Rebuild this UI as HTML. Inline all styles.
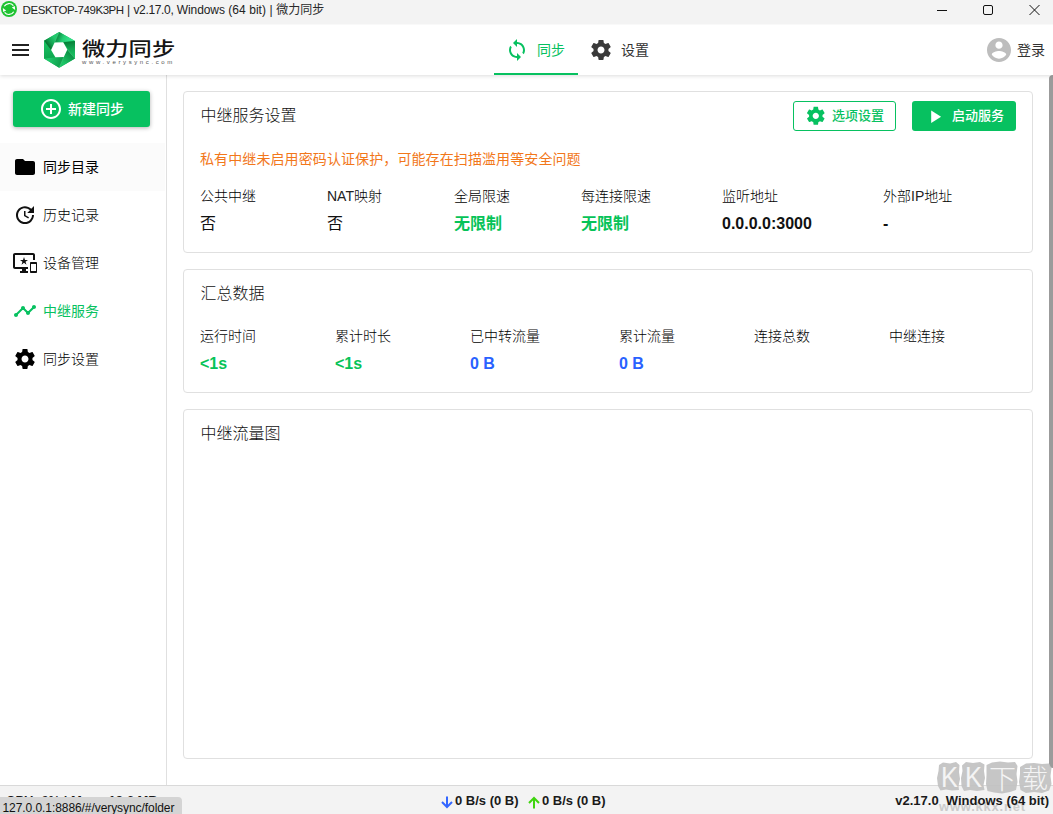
<!DOCTYPE html>
<html lang="zh-CN">
<head>
<meta charset="utf-8">
<title>微力同步</title>
<style>
*{box-sizing:border-box;margin:0;padding:0}
html,body{width:1053px;height:814px;overflow:hidden;background:#fff}
body{position:relative;font-family:"Liberation Sans","Noto Sans CJK SC",sans-serif;color:#222;font-size:14px}
.abs{position:absolute;white-space:nowrap}
svg{position:absolute;display:block;overflow:visible}
/* title bar */
#titlebar{z-index:5;position:absolute;left:0;top:0;width:1053px;height:25px;background:linear-gradient(#f3f3f3 24px,#f9f9f9 24px)}
#titletext{z-index:6;left:22.600px;top:0;height:20px;line-height:20px;font-size:12px;color:#222}
#titletext .l{letter-spacing:-.35px}
/* header */
#header{position:absolute;left:0;top:25px;width:1053px;height:50px;background:#fff;box-shadow:0 1px 4px rgba(0,0,0,.14);z-index:3}
/* sidebar */
#sidebar{position:absolute;left:0;top:75px;width:167px;height:710px;background:#fff;border-right:1px solid #e0e0e0}
#newbtn{position:absolute;left:13px;top:91px;width:137px;height:36px;background:#07c160;border-radius:3px;box-shadow:0 1px 4px rgba(0,0,0,.3)}
.nav{position:absolute;left:0;width:165px;height:48px}
.nav .lbl{position:absolute;left:43px;top:0;line-height:48px;font-size:14px;color:#000;font-weight:300;white-space:nowrap}
.nav.active .lbl{color:#07c160;font-weight:400}
/* cards */
.card{position:absolute;left:183px;width:850px;background:#fff;border:1px solid #e0e0e0;border-radius:4px}
.ctitle{font-size:16px;color:#111;font-weight:300}
.lab{font-size:14px;color:#000;font-weight:300}
.val{font-size:16px;font-weight:bold;color:#111}
.green{color:#06c358}
.blue{color:#2962ff}
/* footer */
#footer{position:absolute;left:0;top:785px;width:1053px;height:29px;background:#f3f3f3;border-top:1px solid #d9d9d9}
.ft{z-index:2;font-size:13px;font-weight:bold;color:#1a1a1a}
</style>
</head>
<body>

<!-- window title bar -->
<div id="titlebar"></div>
<svg style="left:1px;top:1px;z-index:6" width="16" height="16" viewBox="1 1 16 16">
  <circle cx="9" cy="9" r="8" fill="#1fc332"/>
  <path d="M4.300 6.300A5.500 5.500 0 0 1 13.400 5.600" fill="none" stroke="#fff" stroke-width="1.200"/>
  <path d="M13.700 11.700A5.500 5.500 0 0 1 4.600 12.400" fill="none" stroke="#fff" stroke-width="1.200"/>
  <path d="M11.800 7.400L14.800 6.100L15.200 9.900Z" fill="#fff"/>
  <path d="M6.200 10.600L3.200 11.900L2.800 8.100Z" fill="#fff"/>
</svg>
<div id="titletext" class="abs"><span style="font-size:11.500px;letter-spacing:-.45px">DESKTOP-749K3PH</span> | <span style="letter-spacing:-.34px">v2.17.0,</span><span style="letter-spacing:-.07px"> Windows</span><span style="letter-spacing:.05px"> (64 bit)</span><span style="letter-spacing:.1px"> | </span><span style="color:#2a2a2a">微力同步</span></div>
<svg style="left:930px;top:0;z-index:6" width="123" height="20" viewBox="0 0 123 20">
  <path d="M7 10.5H17" stroke="#111" stroke-width="1" fill="none"/>
  <rect x="53.5" y="5.5" width="9" height="9" rx="1.5" fill="none" stroke="#111" stroke-width="1"/>
  <path d="M99.5 5L109.5 15M109.5 5L99.5 15" stroke="#111" stroke-width="1" fill="none"/>
</svg>

<!-- header -->
<div id="header"></div>
<div id="hdr" style="position:absolute;left:0;top:0;width:1053px;height:75px;z-index:4">
<svg style="left:9px;top:38px" width="24" height="24" viewBox="0 0 24 24"><path d="M3 18h17v-2H3v2zm0-5h17v-2H3v2zm0-7v2h17V6H3z" fill="#222"/></svg>
<svg style="left:44px;top:32px" width="31" height="36" viewBox="0 0 31 36">
  <defs>
    <linearGradient id="g1" gradientUnits="userSpaceOnUse" x1="3.5" y1="13.3" x2="11.5" y2="7.2"><stop offset="0" stop-color="#07702f"/><stop offset=".45" stop-color="#14a352"/><stop offset="1" stop-color="#22c86d"/></linearGradient>
    <linearGradient id="g2" gradientUnits="userSpaceOnUse" x1="13" y1="5.3" x2="24" y2="10.1"><stop offset="0" stop-color="#0c8f43"/><stop offset=".5" stop-color="#24cd73"/><stop offset="1" stop-color="#31e088"/></linearGradient>
    <linearGradient id="g3" gradientUnits="userSpaceOnUse" x1="25" y1="9.7" x2="27.5" y2="24"><stop offset="0" stop-color="#067f37"/><stop offset=".5" stop-color="#11a651"/><stop offset="1" stop-color="#19bf61"/></linearGradient>
    <linearGradient id="g4" gradientUnits="userSpaceOnUse" x1="27" y1="22" x2="19" y2="31"><stop offset="0" stop-color="#0a9144"/><stop offset="1" stop-color="#1cc566"/></linearGradient>
    <linearGradient id="g5" gradientUnits="userSpaceOnUse" x1="17.5" y1="30" x2="5" y2="27"><stop offset="0" stop-color="#0e9d4a"/><stop offset="1" stop-color="#20c86b"/></linearGradient>
    <linearGradient id="g6" gradientUnits="userSpaceOnUse" x1="6" y1="26" x2="3" y2="12"><stop offset="0" stop-color="#0fa64f"/><stop offset="1" stop-color="#18bf60"/></linearGradient>
  </defs>
  <polygon points="15.2,0 31,9 31,26.6 15.2,35.8 0,26.6 0,8.8" fill="#14b85a"/>
  <polygon points="0,8.8 15.2,0 7.1,17.9" fill="url(#g1)"/>
  <polygon points="15.2,0 31,9 10.6,10.6" fill="url(#g2)"/>
  <polygon points="31,9 31,26.6 19.2,10.3" fill="url(#g3)"/>
  <polygon points="31,26.6 15.2,35.8 23.3,17.6" fill="url(#g4)"/>
  <polygon points="15.2,35.8 0,26.6 19.8,24.9" fill="url(#g5)"/>
  <polygon points="0,26.6 0,8.8 11.4,25.2" fill="url(#g6)"/>
  <polygon points="7.1,17.9 10.6,10.6 19.2,10.3 23.3,17.6 19.8,24.9 11.4,25.2" fill="#fff"/>
  <path d="M15.2 0L10.6 10.6M15.2 35.8L19.8 24.9M31 26.6L23.3 17.6" stroke="#7be3a8" stroke-width=".5" stroke-opacity=".6" fill="none"/>
</svg>
<div class="abs" id="logotxt" style="left:82px;top:35px;font-size:20px;line-height:28px;font-weight:500;color:#161616;transform-origin:0 50%;transform:scale(1.165,.94)">微力同步</div>
<div class="abs" id="logosub" style="left:82px;top:58px;font-size:6px;line-height:8px;letter-spacing:2.62px;color:#555">www.verysync.com</div>

<svg style="left:505px;top:38px" width="24" height="24" viewBox="0 0 24 24"><path d="M12 4V1L8 5l4 4V6c3.31 0 6 2.69 6 6 0 1.010-.25 1.970-.7 2.800l1.460 1.460C19.540 15.030 20 13.570 20 12c0-4.420-3.580-8-8-8zm0 14c-3.310 0-6-2.690-6-6 0-1.010.25-1.970.7-2.800L5.240 7.740C4.460 8.970 4 10.430 4 12c0 4.420 3.580 8 8 8v3l4-4-4-4v3z" fill="#07c160"/></svg>
<div class="abs" style="left:537px;top:38px;line-height:24px;font-size:14px;color:#07c160">同步</div>
<div style="position:absolute;left:494px;top:73px;width:84px;height:2px;background:#07c160"></div>
<svg style="left:589px;top:38px" width="24" height="24" viewBox="0 0 24 24"><path d="M19.43 12.980c.040-.320.070-.640.070-.980s-.030-.660-.070-.980l2.110-1.650c.190-.150.240-.420.120-.640l-2-3.460c-.120-.220-.390-.300-.610-.220l-2.490 1c-.520-.400-1.080-.730-1.690-.980l-.380-2.650C14.460 2.180 14.250 2 14 2h-4c-.250 0-.460.180-.490.420l-.380 2.650c-.610.250-1.170.590-1.690.980l-2.490-1c-.230-.090-.490 0-.610.220l-2 3.460c-.130.220-.070.490.120.640l2.110 1.650c-.040.320-.070.650-.070.980s.030.660.070.980l-2.110 1.650c-.190.150-.240.420-.120.640l2 3.460c.120.220.390.300.610.220l2.490-1c.520.400 1.080.730 1.690.980l.380 2.650c.030.240.240.420.490.420h4c.250 0 .460-.180.490-.420l.380-2.650c.610-.250 1.170-.590 1.690-.980l2.490 1c.230.090.490 0 .610-.220l2-3.460c.120-.220.070-.490-.120-.640l-2.110-1.650zM12 15.500c-1.930 0-3.500-1.570-3.500-3.500s1.570-3.500 3.500-3.500 3.500 1.570 3.500 3.500-1.570 3.500-3.500 3.500z" fill="#3a3a3a"/></svg>
<div class="abs" style="left:621px;top:38px;line-height:24px;font-size:14px;color:#333">设置</div>

<svg style="left:987px;top:38px" width="24" height="24" viewBox="2 2 20 20"><path d="M12 2C6.480 2 2 6.480 2 12s4.480 10 10 10 10-4.480 10-10S17.520 2 12 2zm0 3c1.660 0 3 1.340 3 3s-1.340 3-3 3-3-1.340-3-3 1.340-3 3-3zm0 14.200c-2.500 0-4.710-1.280-6-3.220.030-1.990 4-3.080 6-3.080 1.990 0 5.970 1.090 6 3.080-1.290 1.940-3.500 3.220-6 3.220z" fill="#bdbdbd"/></svg>
<div class="abs" style="left:1017px;top:38px;line-height:24px;font-size:14px;color:#333">登录</div>
</div>

<!-- sidebar -->
<div id="sidebar"></div>
<div id="newbtn">
  <svg style="left:25.5px;top:6px" width="24" height="24" viewBox="0 0 24 24"><path d="M13 7h-2v4H7v2h4v4h2v-4h4v-2h-4V7zm-1-5C6.480 2 2 6.480 2 12s4.480 10 10 10 10-4.480 10-10S17.520 2 12 2zm0 18c-4.410 0-8-3.590-8-8s3.590-8 8-8 8 3.590 8 8-3.590 8-8 8z" fill="#fff"/></svg>
  <div class="abs" style="left:55px;top:1px;line-height:35px;font-size:14px;font-weight:500;color:#fff">新建同步</div>
</div>
<div class="nav" style="top:143px;background:#fbfbfb">
  <svg style="left:13px;top:12px" width="24" height="24" viewBox="0 0 24 24"><path d="M10 4H4c-1.100 0-1.990.9-1.990 2L2 18c0 1.100.9 2 2 2h16c1.100 0 2-.9 2-2V8c0-1.100-.9-2-2-2h-8l-2-2z" fill="#000"/></svg>
  <div class="lbl" style="color:#000;font-weight:400">同步目录</div>
</div>
<div class="nav" style="top:191px">
  <svg style="left:13px;top:12px" width="24" height="24" viewBox="0 0 24 24"><path d="M21 10.120h-6.780l2.740-2.820c-2.730-2.700-7.150-2.800-9.880-.1-2.730 2.710-2.730 7.080 0 9.790s7.150 2.710 9.880 0C18.320 15.650 19 14.080 19 12.100h2c0 1.980-.88 4.550-2.640 6.290-3.510 3.480-9.210 3.480-12.720 0-3.500-3.470-3.530-9.110-.02-12.580s9.140-3.470 12.650 0L21 3v7.120zM12.500 8v4.250l3.500 2.080-.72 1.210L11 13V8h1.500z" fill="#111"/></svg>
  <div class="lbl">历史记录</div>
</div>
<div class="nav" style="top:239px">
  <svg style="left:13px;top:12px" width="24" height="24" viewBox="0 0 24 24"><path d="M23 11.010L18 11c-.55 0-1 .45-1 1v9c0 .55.45 1 1 1h5c.55 0 1-.45 1-1v-9c0-.55-.45-.99-1-.99zM23 20h-5v-7h5v7zM20 2H2C.89 2 0 2.890 0 4v12c0 1.100.89 2 2 2h7v2H7v2h8v-2h-2v-2h2v-2H2V4h18v5h2V4c0-1.110-.9-2-2-2zm-8.030 7L11 6l-.97 3H7l2.470 1.760-.94 2.910 2.470-1.800 2.470 1.800-.94-2.910L15 9h-3.030z" fill="#111"/></svg>
  <div class="lbl">设备管理</div>
</div>
<div class="nav active" style="top:287px">
  <svg style="left:13px;top:12px" width="24" height="24" viewBox="0 0 24 24"><path d="M23 8c0 1.100-.9 2-2 2-.18 0-.35-.02-.51-.07l-3.560 3.550c.05.160.07.340.07.520 0 1.100-.9 2-2 2s-2-.9-2-2c0-.18.02-.36.07-.52l-2.550-2.550c-.16.05-.34.07-.52.07s-.36-.02-.52-.07l-4.550 4.560c.05.160.07.330.07.510 0 1.100-.9 2-2 2s-2-.9-2-2 .9-2 2-2c.18 0 .35.02.51.07l4.560-4.550C8.020 9.360 8 9.180 8 9c0-1.100.9-2 2-2s2 .9 2 2c0 .18-.02.36-.07.52l2.550 2.550c.16-.05.34-.07.52-.07s.36.02.52.07l3.550-3.560C19.020 8.350 19 8.180 19 8c0-1.100.9-2 2-2s2 .9 2 2z" fill="#07c160"/></svg>
  <div class="lbl">中继服务</div>
</div>
<div class="nav" style="top:335px">
  <svg style="left:13px;top:12px" width="24" height="24" viewBox="0 0 24 24"><path d="M19.43 12.980c.040-.320.070-.640.070-.980s-.030-.660-.070-.980l2.110-1.650c.190-.150.240-.420.120-.640l-2-3.460c-.120-.220-.390-.300-.610-.220l-2.490 1c-.520-.400-1.080-.730-1.690-.980l-.380-2.650C14.460 2.180 14.250 2 14 2h-4c-.250 0-.460.180-.490.420l-.380 2.650c-.610.250-1.170.590-1.690.980l-2.490-1c-.230-.090-.490 0-.610.220l-2 3.460c-.130.220-.070.490.120.640l2.110 1.650c-.040.320-.070.650-.070.980s.030.660.070.980l-2.110 1.650c-.190.150-.240.420-.120.640l2 3.460c.120.220.390.300.610.220l2.490-1c.520.400 1.080.730 1.690.980l.380 2.650c.030.240.240.420.490.420h4c.250 0 .460-.180.490-.420l.380-2.650c.610-.250 1.170-.590 1.690-.980l2.490 1c.230.090.490 0 .610-.220l2-3.460c.120-.220.070-.490-.120-.640l-2.110-1.650zM12 15.500c-1.930 0-3.500-1.570-3.500-3.500s1.570-3.500 3.500-3.500 3.500 1.570 3.500 3.500-1.570 3.500-3.500 3.500z" fill="#000"/></svg>
  <div class="lbl">同步设置</div>
</div>

<!-- cards -->
<div class="card" style="top:91px;height:162px"></div>
<div class="abs ctitle" style="left:200.5px;top:104px;line-height:24px">中继服务设置</div>
<div id="optbtn" style="position:absolute;left:793px;top:101px;width:103px;height:30px;border:1px solid #07c160;border-radius:3px;background:#fff">
  <svg style="left:11px;top:3px" width="21.6" height="21.6" viewBox="0 0 24 24"><path d="M19.43 12.980c.040-.320.070-.640.070-.980s-.030-.660-.070-.980l2.110-1.650c.190-.150.240-.420.120-.640l-2-3.460c-.120-.220-.390-.300-.610-.220l-2.490 1c-.520-.400-1.080-.730-1.690-.980l-.380-2.650C14.460 2.180 14.250 2 14 2h-4c-.250 0-.460.180-.490.420l-.380 2.650c-.610.250-1.170.590-1.690.980l-2.490-1c-.230-.090-.490 0-.610.220l-2 3.460c-.130.220-.070.490.120.640l2.110 1.650c-.040.320-.070.650-.070.980s.030.660.070.980l-2.110 1.650c-.190.150-.240.420-.120.640l2 3.460c.120.220.390.300.610.220l2.490-1c.520.400 1.080.730 1.690.980l.380 2.650c.030.240.240.420.490.420h4c.250 0 .460-.180.490-.420l.380-2.650c.610-.250 1.170-.590 1.690-.980l2.490 1c.230.090.490 0 .610-.220l2-3.460c.120-.220.070-.490-.120-.640l-2.110-1.650zM12 15.500c-1.930 0-3.500-1.570-3.500-3.500s1.570-3.500 3.500-3.500 3.500 1.570 3.500 3.500-1.570 3.500-3.500 3.500z" fill="#07c160"/></svg>
  <div class="abs" style="left:38px;top:0;line-height:27px;font-size:13px;font-weight:500;color:#07c160">选项设置</div>
</div>
<div id="startbtn" style="position:absolute;left:912px;top:101px;width:104px;height:30px;border-radius:3px;background:#07c160">
  <svg style="left:12px;top:4.500px" width="21.6" height="21.6" viewBox="0 0 24 24"><path d="M8 5v14l11-7z" fill="#fff"/></svg>
  <div class="abs" style="left:40px;top:0;line-height:29px;font-size:13px;font-weight:500;color:#fff">启动服务</div>
</div>
<div class="abs" style="left:200px;top:147px;line-height:24px;font-size:14px;letter-spacing:.1px;color:#f2771a">私有中继未启用密码认证保护，可能存在扫描滥用等安全问题</div>

<div class="abs lab" style="left:200px;top:184px;line-height:24px">公共中继</div>
<div class="abs lab" style="left:327px;top:184px;line-height:24px"><span style="color:#222">NAT</span>映射</div>
<div class="abs lab" style="left:454px;top:184px;line-height:24px">全局限速</div>
<div class="abs lab" style="left:581px;top:184px;line-height:24px">每连接限速</div>
<div class="abs lab" style="left:722px;top:184px;line-height:24px">监听地址</div>
<div class="abs lab" style="left:883px;top:184px;line-height:24px">外部<span style="color:#222">IP</span>地址</div>
<div class="abs val" style="left:200px;top:212px;line-height:24px;font-weight:400;color:#111">否</div>
<div class="abs val" style="left:327px;top:212px;line-height:24px;font-weight:400;color:#111">否</div>
<div class="abs val green" style="left:454px;top:212px;line-height:24px">无限制</div>
<div class="abs val green" style="left:581px;top:212px;line-height:24px">无限制</div>
<div class="abs val" style="left:722px;top:212px;line-height:24px">0.0.0.0:3000</div>
<div class="abs val" style="left:883px;top:212px;line-height:24px">-</div>

<div class="card" style="top:269px;height:124px"></div>
<div class="abs ctitle" style="left:200.5px;top:282px;line-height:24px">汇总数据</div>
<div class="abs lab" style="left:200px;top:324px;line-height:24px">运行时间</div>
<div class="abs lab" style="left:335px;top:324px;line-height:24px">累计时长</div>
<div class="abs lab" style="left:470px;top:324px;line-height:24px">已中转流量</div>
<div class="abs lab" style="left:619px;top:324px;line-height:24px">累计流量</div>
<div class="abs lab" style="left:754px;top:324px;line-height:24px">连接总数</div>
<div class="abs lab" style="left:889px;top:324px;line-height:24px">中继连接</div>
<div class="abs val green" style="left:200px;top:352px;line-height:24px">&lt;1s</div>
<div class="abs val green" style="left:335px;top:352px;line-height:24px">&lt;1s</div>
<div class="abs val blue" style="left:470px;top:352px;line-height:24px">0 B</div>
<div class="abs val blue" style="left:619px;top:352px;line-height:24px">0 B</div>

<div class="card" style="top:409px;height:350px"></div>
<div class="abs ctitle" style="left:200.5px;top:422px;line-height:24px">中继流量图</div>

<!-- scrollbar thumb -->
<div style="position:absolute;left:1049px;top:75px;width:8px;height:693px;background:#9b9b9b;border-radius:4px"></div>

<!-- footer -->
<div id="footer"></div>
<div class="abs ft" style="left:6px;top:793px;line-height:16px">CPU: 0% | Mem: 19.6 MB</div>
<svg style="left:440px;top:795px" width="14" height="14" viewBox="0 0 14 14"><path d="M7 1.500V11.500M2 7L7 12L12 7" fill="none" stroke="#3366ff" stroke-width="2"/></svg>
<div class="abs ft" style="left:455px;top:793px;line-height:16px">0 B/s (0 B)</div>
<svg style="left:527px;top:795.500px" width="14" height="14" viewBox="0 0 14 14"><path d="M7 12.500V2.500M2 7L7 2L12 7" fill="none" stroke="#3fd40f" stroke-width="2"/></svg>
<div class="abs ft" style="left:542px;top:793px;line-height:16px">0 B/s (0 B)</div>
<div class="abs ft" style="right:4px;top:793px;line-height:16px;white-space:pre">v2.17.0  Windows (64 bit)</div>

<!-- watermark -->
<svg id="wm" style="left:930px;top:755px" width="123" height="59" viewBox="930 755 123 59">
  <g fill="#c2c2c2" opacity=".92">
    <path d="M939 765L943 762.500L950 763.500L956 762L959.500 765L959 772L960 779L958.500 786L959 790L952 790.500L946 789.500L940.500 790.500L938 786L937 778L938.500 771Z"/>
    <path d="M962 765.500L966 762L973 763L980 762L984.500 764.500L984 771L985 778L983.500 785L984.500 790L977 791L970 790L964 791L961.500 786L961 778L962.500 771Z"/>
    <path d="M986.500 765L992 762.500L1000 761.500L1008 762.500L1015 762L1017.500 766L1016.500 774L1017.500 782L1016 790L1010 792L1002 793.500L994 792.500L987.500 791L986 784L986.500 775Z"/>
    <path d="M1020 767L1026 763.500L1034 763L1042 764L1049 763.500L1051.500 768L1050.500 776L1051.500 784L1049 790.500L1042 793L1034 792L1026 793L1020.500 790L1019 782L1020 774Z"/>
  </g>
  <g fill="#f4f4f4" font-family="'Liberation Sans','Noto Sans CJK SC',sans-serif">
    <text x="941" y="787" font-size="30" textLength="17" lengthAdjust="spacingAndGlyphs">K</text>
    <text x="965" y="787" font-size="30" textLength="17" lengthAdjust="spacingAndGlyphs">K</text>
    <text x="989" y="789" font-size="27" font-weight="300">下</text>
    <text x="1022" y="788" font-size="26" font-weight="300">载</text>
  </g>
  <text x="939" y="811" font-size="13" font-weight="bold" fill="#cbcbcb" font-family="'Liberation Sans',sans-serif" textLength="86" lengthAdjust="spacing">www.kkx.net</text>
</svg>

<!-- status bubble -->
<div style="z-index:7;position:absolute;left:0;top:796.500px;width:181.500px;height:18px;background:#d4d4d4;border-top-right-radius:4px"></div>
<div class="abs" style="z-index:8;left:2.500px;top:799.500px;line-height:16px;font-size:12px;letter-spacing:-.07px;color:#111">127.0.0.1:8886/#/verysync/folder</div>

</body>
</html>
